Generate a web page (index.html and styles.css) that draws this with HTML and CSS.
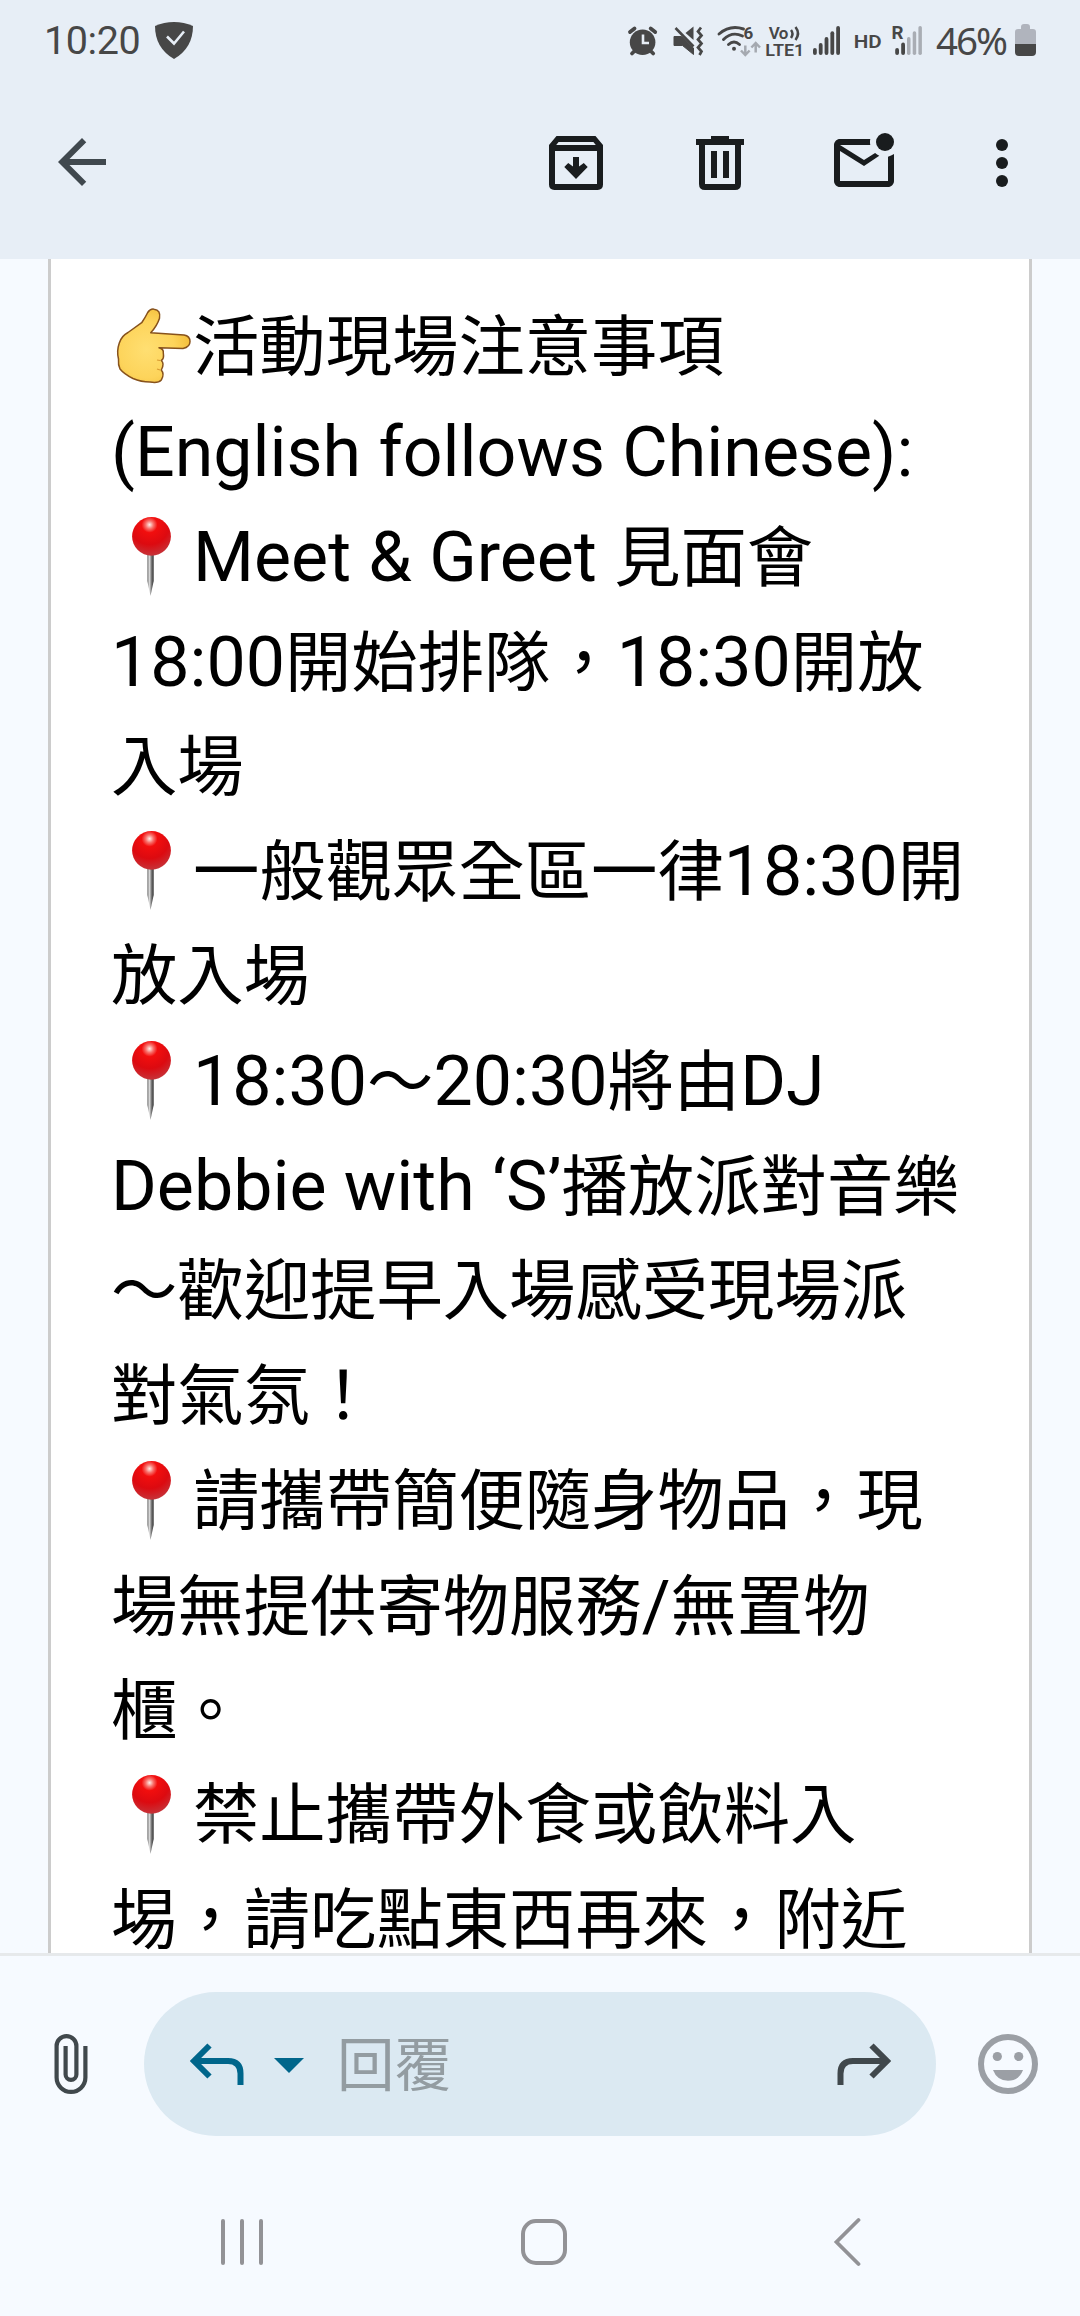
FILE: index.html
```html
<!DOCTYPE html>
<html lang="zh-Hant">
<head>
<meta charset="utf-8">
<title>郵件</title>
<link rel="stylesheet" href="styles.css">
</head>
<body>
<svg class="defs" width="0" height="0" aria-hidden="true">
  <defs>
    <radialGradient id="pinHead" cx=".45" cy=".2" r=".85">
      <stop offset="0" stop-color="#fff0ea"/><stop offset=".12" stop-color="#f8706a"/><stop offset=".24" stop-color="#f20e0e"/><stop offset=".6" stop-color="#dc0a10"/><stop offset="1" stop-color="#c23a40"/>
    </radialGradient>
    <linearGradient id="pinNeedle" x1="0" x2="1" y1="0" y2="0">
      <stop offset="0" stop-color="#777"/><stop offset=".35" stop-color="#d8d8d8"/><stop offset=".65" stop-color="#777"/><stop offset="1" stop-color="#333"/>
    </linearGradient>
    <radialGradient id="skin" cx=".4" cy=".55" r=".7">
      <stop offset="0" stop-color="#ffdf72"/><stop offset=".55" stop-color="#fdd45b"/><stop offset="1" stop-color="#f0b62e"/>
    </radialGradient>
    <symbol id="pin" viewBox="0 0 82 82">
      <path d="M36.300 37h6.400v27l-3.200 15-3.200-15z" fill="url(#pinNeedle)"/>
      <circle cx="40.500" cy="19.400" r="19.400" fill="url(#pinHead)"/>
    </symbol>
  </defs>
</svg>
<div class="screen">
  <header class="top">
    <div class="status">
      <span class="clock">10:20</span>
      <svg class="shield" width="38" height="37" viewBox="0 0 38 37"><path d="M0 4Q9 0 19 0t19 4Q38 26 19 37 0 26 0 4z" fill="#474747"/><path d="M12 14.500l7 7 10-12" fill="none" stroke="#e7eef6" stroke-width="2.600"/></svg>
      <svg class="indicators" width="300" height="44" viewBox="620 18 300 44">
        <g fill="#474747" stroke="#474747">
          <circle cx="642.600" cy="42.300" r="12.800" stroke="none"/>
          <path d="M630 32l4.500-3.500M655.200 32l-4.500-3.500M632 53.500l3-3M653.200 53.500l-3-3" stroke-width="3.800" stroke-linecap="round"/>
          <path d="M643 34.500v8.500h6" fill="none" stroke="#e7eef6" stroke-width="2.600"/>
          <path d="M674 36.500h7.500l12 11.500v6.500l-11-9H674z" stroke-width="1" stroke-linejoin="round"/>
          <path d="M675.500 28l18 18.500" stroke-width="2.600"/>
          <path d="M685.500 33l8-6.500V40z" stroke="none"/>
          <path d="M701 27.500l-3 4 3.500 4-3.500 4 3.500 4-3.500 4 3.500 4-2 3.500" fill="none" stroke-width="2.700"/>
          <g fill="none" stroke-width="2.900" stroke-linecap="round">
            <path d="M719 34Q730 24.500 743.500 29M723.500 39.500Q732 31 742.500 36M728.500 44.500Q734 39.500 739.500 44.500"/>
          </g>
          <circle cx="734" cy="48.700" r="2" stroke="none"/>
          <g fill="none" stroke="#a5a9b0" stroke-width="2.500"><path d="M745.300 45.500v9.500M741 50.500l4.300 4.500 4.300-4.500M755.700 52.500V43M751.400 47.500l4.300-4.500 4.300 4.500"/></g>
          <g fill="none" stroke-width="2.500"><path d="M791 30q3 3.500 0 8M795.500 27q5 6.500 0 13"/></g>
        </g>
        <g fill="#474747">
          <rect x="813" y="48" width="3.800" height="7" rx="1.900"/><rect x="818.800" y="43" width="3.800" height="12" rx="1.900"/><rect x="824.600" y="37" width="3.800" height="18" rx="1.900"/><rect x="830.400" y="31.300" width="3.800" height="23.700" rx="1.900"/><rect x="836.200" y="26" width="3.800" height="29" rx="1.900"/>
          <rect x="895.200" y="48" width="3.800" height="7" rx="1.900"/><rect x="901.200" y="42.500" width="3.800" height="12.500" rx="1.900"/>
          <g fill="#a9adb4"><rect x="907" y="37" width="3.500" height="18" rx="1.700"/><rect x="912.700" y="31.300" width="3.500" height="23.700" rx="1.700"/><rect x="918.400" y="26" width="3.500" height="29" rx="1.700"/></g>
          <g font-family="Roboto, sans-serif" font-weight="700">
            <text x="743.500" y="39.300" font-size="17">6</text>
            <text x="768.800" y="38.500" font-size="17" font-weight="600" textLength="19.500">Vo</text>
            <text x="765.300" y="55.600" font-size="17.300" font-weight="600" textLength="39" lengthAdjust="spacingAndGlyphs">LTE1</text>
            <text x="853.700" y="47.700" font-size="19.200" font-weight="600" textLength="28" lengthAdjust="spacingAndGlyphs">HD</text>
            <text x="891.500" y="39.300" font-size="18.700">R</text>
          </g>
        </g>
      </svg>
      <span class="percent">46%</span>
      <svg class="battery" width="21" height="32" viewBox="0 0 21 32"><path d="M6 5V3q0-3 3-3h3q3 0 3 3v2h3q3 0 3 3v12H0V8q0-3 3-3z" fill="#b0b4bd"/><path d="M0 20h21v8q0 4-4 4H4q-4 0-4-4z" fill="#474747"/></svg>
    </div>
    <div class="toolbar">
      <svg class="back" width="72" height="72" viewBox="0 0 24 24"><path d="M20 11H7.830l5.590-5.590L12 4l-8 8 8 8 1.410-1.410L7.830 13H20z"/></svg>
      <svg width="72" height="72" viewBox="0 0 24 24"><path fill-rule="evenodd" d="M5.500 3h13L21 6v13.200q0 1.800-1.800 1.800H4.800Q3 21 3 19.200V6zM6.200 5l-.8 1h13.200l-.8-1zM5 8v11h14V8zM11 10h2v3.200l1.600-1.200 1.300 1.300L12 17.300 8.100 13.300l1.300-1.300 1.600 1.200z"/></svg>
      <svg width="72" height="72" viewBox="0 0 24 24"><path fill-rule="evenodd" d="M4 4h5V3h6v1h5v2h-1v13q0 2-2 2H7q-2 0-2-2V6H4zM7 6v13h10V6zM9 8h2v9H9zM13 8h2v9h-2z"/></svg>
      <svg width="72" height="72" viewBox="0 0 24 24"><path fill-rule="evenodd" d="M22 9v9c0 1.100-.9 2-2 2H4c-1.100 0-2-.9-2-2V6c0-1.100.9-2 2-2h10.100c-.1.300-.1.700-.1 1s0 .7.100 1H4l8 5 3.700-2.300c.4.400.9.700 1.400.9L12 13 4 8v10h16V9.900c.7-.2 1.400-.5 2-.9z"/><circle cx="19" cy="5" r="3"/></svg>
      <svg width="72" height="72" viewBox="0 0 24 24"><circle cx="12" cy="6" r="2"/><circle cx="12" cy="12" r="2"/><circle cx="12" cy="18" r="2"/></svg>
    </div>
  </header>
  <main class="mail">
    <article class="card">
      <p><svg class="emoji" viewBox="0 0 82 82"><path d="M8.300 36C10 31 13 27.500 17 25.500L30.700 15.700Q34 11 36.700 5.500 39.500 1.500 43 2.200q7 1 5.500 9Q46 19 39.700 25.700L73 28q6 1 6 6.500t-7 7L48 40.700Q53 42 52.300 46q1 6-2 7.500 3.500 3 0 9.500 3.500 4 0 10-3 3.500-11.300 2Q30 75 22 71.500 13 67 9 62 7 58 7.500 52 5.500 44 8.300 36z" fill="url(#skin)" stroke="#87521c" stroke-width="1.500" stroke-linejoin="round"/><path d="M49 53.500l-3-.5M49 63l-3-1" fill="none" stroke="#d89a30" stroke-width="1.200"/></svg><span>活動現場注意事項</span></p>
      <p>(English follows Chinese):</p>
      <p><svg class="emoji"><use href="#pin"/></svg>Meet &amp; Greet <span>見面會</span></p>
      <p>18:00<span>開始排隊，</span>18:30<span>開放</span></p>
      <p><span>入場</span></p>
      <p><svg class="emoji"><use href="#pin"/></svg><span>一般觀眾全區一律</span>18:30<span>開</span></p>
      <p><span>放入埸</span></p>
      <p><svg class="emoji"><use href="#pin"/></svg>18:30<span>～</span>20:30<span>將由</span>DJ</p>
      <p>Debbie with ‘S’<span>播放派對音樂</span></p>
      <p><span>～歡迎提早入場感受現場派</span></p>
      <p><span>對氣氛！</span></p>
      <p><svg class="emoji"><use href="#pin"/></svg><span>請攜帶簡便隨身物品，現</span></p>
      <p><span>場無提供寄物服務</span>/<span>無置物</span></p>
      <p><span>櫃。</span></p>
      <p><svg class="emoji"><use href="#pin"/></svg><span>禁止攜帶外食或飲料入</span></p>
      <p><span>埸，請吃點東西再來，附近</span></p>
    </article>
  </main>
  <footer class="reply">
    <svg width="72" height="72" viewBox="0 0 24 24"><path d="M16.800 6v10.500a4.800 4.800 0 0 1-9.600 0V6a3.300 3.300 0 0 1 6.600 0v9.500a1.800 1.800 0 0 1-3.600 0V6" fill="none" stroke="#40484c" stroke-width="1.400"/></svg>
    <div class="pill">
      <svg width="54" height="44" viewBox="0 0 54 44"><path d="M4 19H38q12.500 0 12.500 12.500V43M19.500 3.500L4 19l15.500 15.500" fill="none" stroke="#00668b" stroke-width="6"/></svg>
      <svg class="caret" width="30" height="15" viewBox="0 0 30 15"><path d="M0 0h30L15 15z" fill="#00668b"/></svg>
      <span class="hint">回覆</span>
      <svg class="forward" width="54" height="44" viewBox="0 0 54 44"><path d="M50 19H16Q3.500 19 3.500 31.500V43M34.500 3.500L50 19 34.500 34.500" fill="none" stroke="#40484c" stroke-width="6"/></svg>
    </div>
    <svg class="smile" width="60" height="60" viewBox="0 0 60 60"><circle cx="30" cy="30" r="27" fill="none" stroke="#9b9fa5" stroke-width="6"/><g fill="#9b9fa5"><circle cx="19.300" cy="22.500" r="4.600"/><circle cx="40.700" cy="22.500" r="4.600"/><path d="M15 36h30q-4 10.700-15 10.700T15 36z"/></g></svg>
  </footer>
  <nav class="keys">
    <svg width="44" height="50" viewBox="0 0 44 50"><path d="M4 4v42M23 4v42M42 4v42" stroke="#929296" stroke-width="4" stroke-linecap="round"/></svg>
    <svg width="48" height="50" viewBox="0 0 48 50"><rect x="3" y="4" width="42" height="42" rx="13" fill="none" stroke="#929296" stroke-width="4"/></svg>
    <svg width="28" height="50" viewBox="0 0 28 50"><path d="M25.500 3L3.500 25l22 22" fill="none" stroke="#929296" stroke-width="3.800" stroke-linecap="round"/></svg>
  </nav>
</div>
</body>
</html>
```
FILE: styles.css
```css
* { box-sizing: border-box; }
body { margin: 0; background: #f6faff; font-family: Roboto, "Noto Sans CJK TC", sans-serif; }
svg { display: block; flex: none; }
.defs { position: absolute; }
.screen { width: 1080px; height: 2316px; display: flex; flex-direction: column; overflow: hidden; }
.top { height: 259px; flex: none; background: #e7eef6; }
.status { height: 80px; display: flex; align-items: center; padding: 0 44px 0 44px; color: #474747; }
.clock { font-size: 39.500px; width: 111px; letter-spacing: -.4px; line-height: 76px; padding-top: 2px; }
.shield { margin-top: 1px; }
.indicators { margin-left: 427px; overflow: visible; }
.percent { font-family: "Noto Sans", sans-serif; font-size: 38.500px; letter-spacing: -2px; margin-left: 16px; width: 79px; line-height: 76px; white-space: nowrap; }
.toolbar { display: flex; padding: 47px 42px 0 46px; gap: 72px; fill: #191c1e; }
.toolbar .back { fill: #40484e; margin-right: auto; margin-top: -1px; }
.toolbar svg:last-child { margin-left: -6px; }
.mail { height: 1694px; flex: none; overflow: hidden; padding: 0 48px; }
.card { background: #fff; border: solid #ccc; border-width: 0 3px; padding: 36px 0 0 60px; font-size: 69.900px; line-height: 105px; color: #000; }
.card p { margin: 0; height: 104.900px; white-space: pre; display: flex; align-items: baseline; }
.card span { font-size: 66.350px; }
.emoji { width: 82px; height: 82px; align-self: flex-start; margin-top: 12px; }
.reply { height: 219px; flex: none; display: flex; align-items: center; border-top: 3px solid #e6e9eb; padding: 0 42px 0 34.500px; }
.pill { width: 792px; height: 144px; margin-left: 37.500px; border-radius: 72px; background: #dbe9f2; display: flex; align-items: center; padding: 0 45px 0 46px; }
.caret { margin: 2px 0 0 30px; }
.hint { font-size: 57.500px; color: #939ca1; margin-left: 33px; line-height: 80px; padding-top: 5px; }
.forward { margin-left: auto; }
.smile { margin-left: auto; }
.keys { flex: 1; display: flex; padding: 45px 0 0 219px; }
.keys svg:nth-child(2) { margin-left: 257px; }
.keys svg:nth-child(3) { margin-left: 265px; }
```
